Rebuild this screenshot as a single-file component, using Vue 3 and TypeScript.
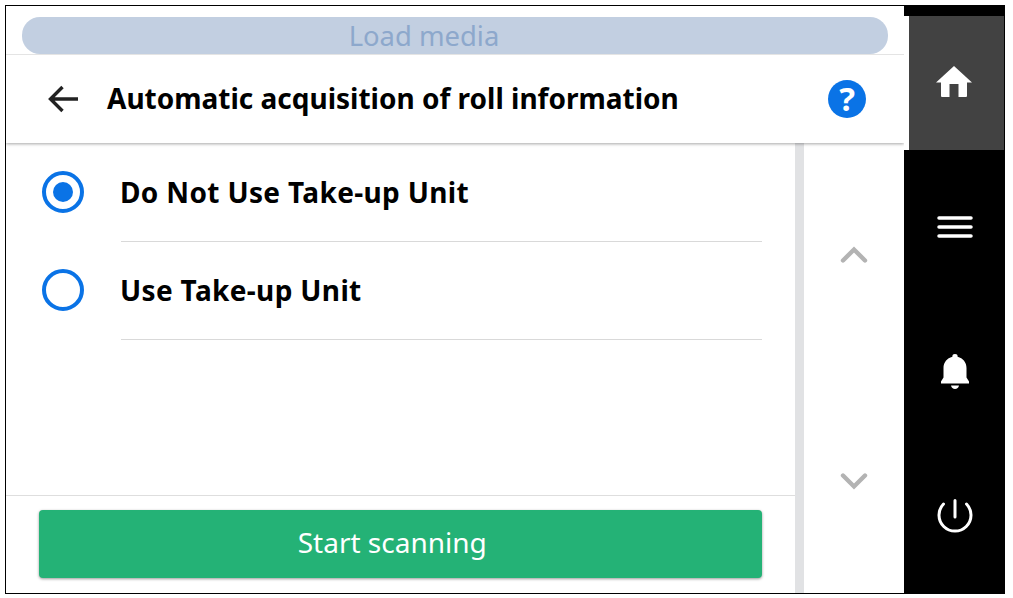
<script setup lang="ts">
interface RollOption {
  id: string
  label: string
}

const options: RollOption[] = [
  { id: 'no-takeup', label: 'Do Not Use Take-up Unit' },
  { id: 'takeup', label: 'Use Take-up Unit' }
]

const selectedId = 'no-takeup'
</script>

<template>
  <div class="frame">
    <main class="main">
      <div class="top-strip">
        <div class="media-pill">Load media</div>
      </div>
      <header class="header">
        <svg class="back-icon" viewBox="0 0 32 32" aria-hidden="true">
          <path d="M31 16H4M15.500 4 3.500 16l12 12" fill="none" stroke="#222" stroke-width="3.400" />
        </svg>
        <h1 class="title">Automatic acquisition of roll information</h1>
        <div class="help">?</div>
      </header>
      <div class="body">
        <section class="content">
          <ul class="options">
            <li v-for="option in options" :key="option.id" class="option">
              <span class="radio" :class="{ checked: option.id === selectedId }"></span>
              <span class="option-label">{{ option.label }}</span>
            </li>
          </ul>
          <footer class="footer">
            <button class="start" type="button">Start scanning</button>
          </footer>
        </section>
        <div class="scrollbar"></div>
        <div class="pager">
          <svg class="chevron" viewBox="0 0 28 18" aria-hidden="true">
            <path d="M3 14.500 14 3.500 25 14.500" fill="none" stroke="#b3b3b3" stroke-width="4.400" stroke-linecap="round" />
          </svg>
          <svg class="chevron" viewBox="0 0 28 18" aria-hidden="true">
            <path d="M3 3.500 14 14.500 25 3.500" fill="none" stroke="#b3b3b3" stroke-width="4.400" stroke-linecap="round" />
          </svg>
        </div>
      </div>
    </main>
    <nav class="side">
      <div class="home-tile">
        <svg class="home-icon" viewBox="0 1 36 31" aria-hidden="true">
          <path fill="#fff" d="M18 1 0 17.500h5V31a1 1 0 0 0 1 1h7.500V19h9v13H30a1 1 0 0 0 1-1V17.500h5z" />
        </svg>
      </div>
      <div class="side-items">
        <div class="side-item">
          <svg class="menu-icon" viewBox="0 0 36 24" aria-hidden="true">
            <path d="M2 3h32M2 12h32M2 21h32" stroke="#fff" stroke-width="3.500" stroke-linecap="round" />
          </svg>
        </div>
        <div class="side-item">
          <svg class="bell-icon" viewBox="0 0 30 36" aria-hidden="true">
            <path fill="#fff" d="M15 0a2.600 2.600 0 0 0-2.600 2.800C7 4.200 3.500 8.600 3.500 14v9.500L1 27.500v2h28v-2l-2.500-4V14c0-5.400-3.500-9.800-8.900-11.200A2.600 2.600 0 0 0 15 0z" />
            <path fill="#fff" d="M11 31.500h8c-.4 2-2 3.500-4 3.500s-3.600-1.500-4-3.500z" />
          </svg>
        </div>
        <div class="side-item">
          <svg class="power-icon" viewBox="0 0 36 34" aria-hidden="true">
            <path d="M6.500 5a16 16 0 1 0 23 0M18 1.500V18" fill="none" stroke="#fff" stroke-width="3" stroke-linecap="round" />
          </svg>
        </div>
      </div>
    </nav>
  </div>
</template>

<style scoped>
.frame {
  box-sizing: border-box;
  display: flex;
  width: 1000px;
  height: 589px;
  margin: 5px 0 0 5px;
  border: 1px solid #000;
  border-right: 0;
  background: #fff;
  font-family: "Noto Sans", "Noto Sans CJK JP", sans-serif;
  overflow: hidden;
}

.main {
  display: flex;
  flex-direction: column;
  width: 898px;
}

.top-strip {
  height: 48px;
  padding: 11px 16px 0;
  box-sizing: border-box;
}

.media-pill {
  height: 37px;
  padding-right: 62px;
  border-radius: 18px;
  background: #c2cfe1;
  color: #8da8cc;
  font-size: 27.400px;
  line-height: 37px;
  text-align: center;
}

.header {
  position: relative;
  display: flex;
  align-items: center;
  height: 89px;
  padding: 0 38px 1px 41px;
  box-sizing: border-box;
  border-top: 1px solid #e4e4e4;
  background: #fff;
  box-shadow: 0 1px 3px rgba(0, 0, 0, 0.35);
  clip-path: inset(0 0 -6px 0);
}

.back-icon {
  width: 32px;
  height: 32px;
  flex: none;
}

.title {
  flex: 1;
  margin: 0 0 2px 28px;
  color: #000;
  font-size: 28px;
  font-weight: 700;
  white-space: nowrap;
}

.help {
  width: 38px;
  height: 38px;
  border-radius: 50%;
  background: #0a73e6;
  color: #fff;
  font-size: 33px;
  font-weight: 700;
  line-height: 38px;
  text-align: center;
}

.body {
  display: flex;
  flex: 1;
  min-height: 0;
}

.content {
  display: flex;
  flex-direction: column;
  width: 789px;
}

.options {
  flex: 1;
  margin: 0;
  padding: 1px 0 0;
  list-style: none;
}

.option {
  display: flex;
  align-items: center;
  height: 98px;
  padding-left: 36px;
}

.radio {
  position: relative;
  flex: none;
  box-sizing: border-box;
  width: 42px;
  height: 42px;
  margin-bottom: 3px;
  border: 4px solid #0a73e6;
  border-radius: 50%;
}

.radio.checked::after {
  content: "";
  position: absolute;
  inset: 7px;
  border-radius: 50%;
  background: #0a73e6;
}

.option-label {
  display: flex;
  align-items: center;
  align-self: stretch;
  flex: none;
  box-sizing: border-box;
  width: 641px;
  margin-left: 37px;
  padding-bottom: 2px;
  border-bottom: 1px solid #d9d9d9;
  color: #000;
  font-size: 28px;
  font-weight: 700;
  letter-spacing: 0.35px;
  text-indent: -1px;
}

.footer {
  height: 98px;
  padding: 14px 33px 0 32.500px;
  box-sizing: border-box;
  border-top: 1px solid #dedede;
}

.start {
  display: block;
  width: 723.500px;
  height: 68px;
  padding: 0 16px 4px 0;
  border: 0;
  border-radius: 4px;
  background: #24b276;
  box-shadow: 0 1px 3px rgba(0, 0, 0, 0.4);
  color: #fff;
  font-family: inherit;
  font-size: 28px;
}

.scrollbar {
  flex: none;
  width: 9px;
  background: #e1e2e4;
}

.pager {
  display: flex;
  flex: 1;
  flex-direction: column;
  align-items: center;
  gap: 208px;
  padding-top: 103px;
  box-sizing: border-box;
}

.chevron {
  width: 28px;
  height: 18px;
}

.side {
  display: flex;
  flex: none;
  flex-direction: column;
  width: 101px;
  padding-top: 10px;
  box-sizing: border-box;
  background: #000;
}

.home-tile {
  display: flex;
  align-items: center;
  justify-content: center;
  height: 134px;
  margin-right: 1px;
  padding: 0 5px 3px 0;
  box-sizing: border-box;
  border-left: 5px solid #fff;
  background: #424242;
}

.home-icon {
  width: 36px;
  height: 31px;
}

.side-items {
  padding-top: 5px;
}

.side-item {
  display: flex;
  align-items: center;
  justify-content: center;
  height: 144.500px;
}

.menu-icon {
  width: 36px;
  height: 24px;
}

.bell-icon {
  width: 30px;
  height: 36px;
}

.power-icon {
  width: 36px;
  height: 34px;
}
</style>

<style>
html,
body {
  background: #fff;
}
</style>
